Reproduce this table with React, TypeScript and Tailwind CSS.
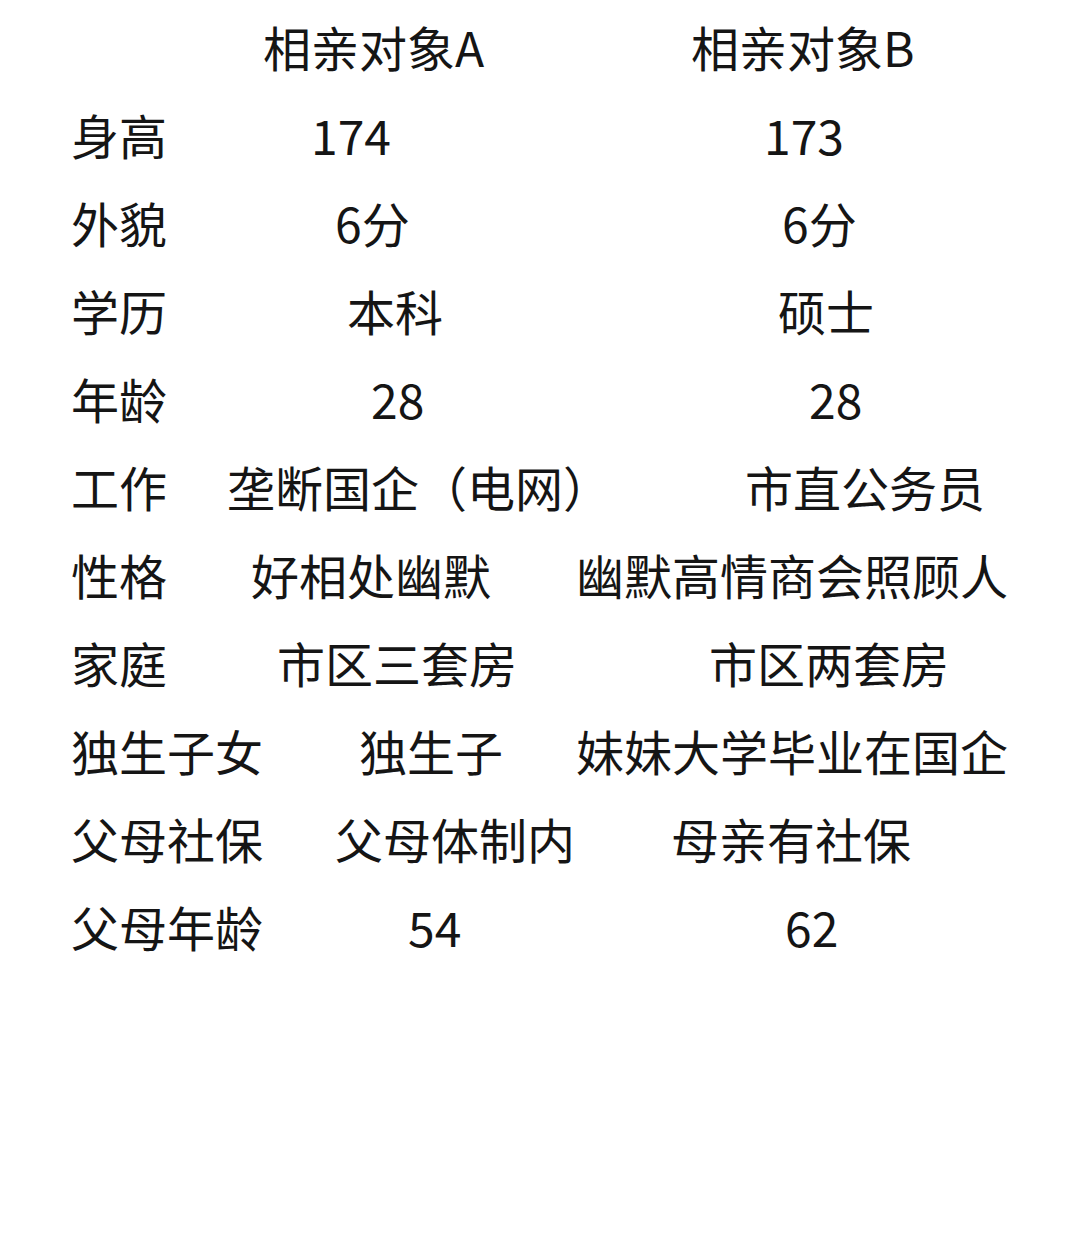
import React from "react";

type Row = {
  label: string;
  a: string;
  b: string;
  labelCls: string;
  aCls: string;
};

// widths taken so each value starts where it sits in the picture
const rows: Row[] = [
  { label: "", a: "相亲对象A", b: "相亲对象B", labelCls: "w-[192px]", aCls: "w-[428px]" },
  { label: "身高", a: "174", b: "173", labelCls: "w-[240px]", aCls: "w-[453px]" },
  { label: "外貌", a: "6分", b: "6分", labelCls: "w-[264px]", aCls: "w-[447px]" },
  { label: "学历", a: "本科", b: "硕士", labelCls: "w-[276px]", aCls: "w-[431px]" },
  { label: "年龄", a: "28", b: "28", labelCls: "w-[300px]", aCls: "w-[438px]" },
  { label: "工作", a: "垄断国企（电网）", b: "市直公务员", labelCls: "w-[156px]", aCls: "w-[518px]" },
  { label: "性格", a: "好相处幽默", b: "幽默高情商会照顾人", labelCls: "w-[180px]", aCls: "w-[325px]" },
  { label: "家庭", a: "市区三套房", b: "市区两套房", labelCls: "w-[206px]", aCls: "w-[432px]" },
  { label: "独生子女", a: "独生子", b: "妹妹大学毕业在国企", labelCls: "w-[288px]", aCls: "w-[217px]" },
  { label: "父母社保", a: "父母体制内", b: "母亲有社保", labelCls: "w-[264px]", aCls: "w-[336px]" },
  { label: "父母年龄", a: "54", b: "62", labelCls: "w-[337px]", aCls: "w-[377px]" },
];

const App: React.FC = () => {
  return (
    <div
      className="w-[1080px] h-[1257px] bg-white text-[#151515] pt-[2px] pl-[71px]"
      style={{ fontFamily: '"Noto Sans CJK SC", "Noto Sans", sans-serif' }}
    >
      {rows.map((r, i) => (
        <div key={i} className="flex items-center h-[88px] text-[48px] leading-[88px] whitespace-nowrap">
          <span className={`${r.labelCls} shrink-0`}>{r.label}</span>
          <span className={`${r.aCls} shrink-0`}>{r.a}</span>
          <span>{r.b}</span>
        </div>
      ))}
    </div>
  );
};

export default App;
